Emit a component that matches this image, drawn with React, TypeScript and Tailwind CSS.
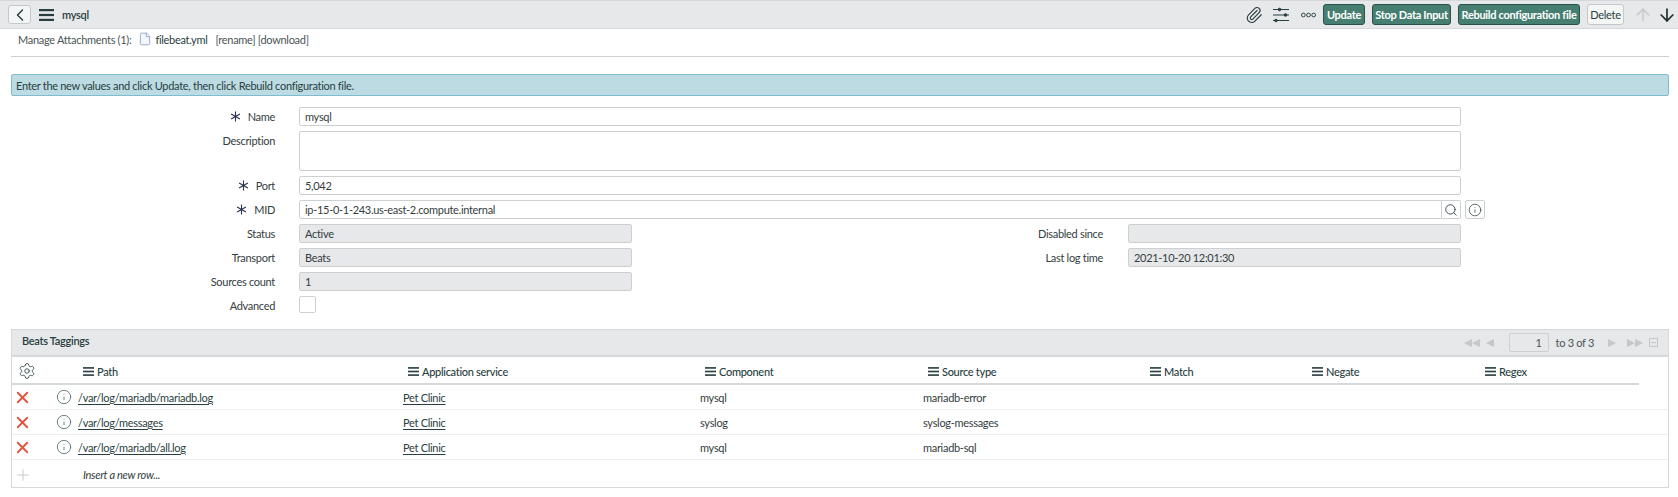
import { ArrowDown, ArrowUp, ChevronLeft, File, Info, Paperclip, Plus, Search, Settings, X } from "lucide-react";

const Bars = ({ className }: { className: string }) => (
  <svg viewBox="0 0 15 12" className={className} fill="#293e40">
    <rect x="0" y="0" width="15" height="2.2" />
    <rect x="0" y="4.9" width="15" height="2.2" />
    <rect x="0" y="9.8" width="15" height="2.2" />
  </svg>
);

const Star = () => (
  <svg viewBox="0 0 12 12" className="w-[11px] h-[11px] shrink-0" stroke="#2c3350" strokeWidth="1.2">
    <path d="M6 0.5V11.5M1.2 3.2L10.8 8.8M1.2 8.8L10.8 3.2" />
  </svg>
);

const Tri = ({ dir, className }: { dir: "l" | "r"; className: string }) => (
  <svg viewBox="0 0 8 8" className={className} fill="#c4c8ca">
    <polygon points={dir === "l" ? "8,0 8,8 0,4" : "0,0 0,8 8,4"} />
  </svg>
);

const Field = ({ value, className, disabled }: { value?: string; className: string; disabled?: boolean }) => (
  <div
    className={`h-[19px] border border-[#cdd0d2] rounded-[2px] px-[5px] flex items-center text-[#343d3e] ${
      disabled ? "bg-[#e6e8ea]" : "bg-white"
    } ${className}`}
  >
    {value}
  </div>
);

const Label = ({ text, required }: { text: string; required?: boolean }) => (
  <div className="w-[264px] h-[19px] flex items-center justify-end gap-[7px] text-[#343d3e]">
    {required && <Star />}
    <span>{text}</span>
  </div>
);

const columns = ["Path", "Application service", "Component", "Source type", "Match", "Negate", "Regex"];

const rows = [
  { path: "/var/log/mariadb/mariadb.log", component: "mysql", source: "mariadb-error" },
  { path: "/var/log/messages", component: "syslog", source: "syslog-messages" },
  { path: "/var/log/mariadb/all.log", component: "mysql", source: "mariadb-sql" },
];

const gridCols = "grid grid-cols-[66px_325px_297px_223px_222px_162px_173px_159px]";

export default function App() {
  return (
    <div className="w-[1678px] h-[497px] overflow-hidden bg-white text-[11px] tracking-[-0.3px] leading-none font-[Lato,sans-serif] text-[#293e40]">
      <div className="h-[29px] bg-[#e6e8ea] border-y border-[#d5d8da] pl-[8px] pr-[1px] flex items-center">
        <div className="w-[23px] h-[19px] bg-[#f4f5f5] border border-[#c4c8ca] rounded-[3px] flex items-center justify-center">
          <ChevronLeft className="w-[20px] h-[20px] text-[#293e40]" strokeWidth={1.75} />
        </div>
        <Bars className="w-[15px] h-[12px] ml-[8px]" />
        <span className="ml-[8px] font-semibold">mysql</span>
        <div className="ml-auto flex items-center">
          <Paperclip className="w-[18px] h-[18px] text-[#293e40]" strokeWidth={1.5} />
          <svg viewBox="0 0 16 16" className="w-[16px] h-[16px] ml-[10px]" stroke="#293e40" fill="#293e40" strokeWidth="1">
            <path d="M0 2.5H16M0 8H16M0 13.5H16" />
            <circle cx="6.5" cy="2.5" r="1.3" />
            <circle cx="12.5" cy="8" r="1.3" />
            <circle cx="3" cy="13.5" r="1.3" />
          </svg>
          <svg viewBox="0 0 16 6" className="w-[15px] h-[6px] ml-[12px]" stroke="#293e40" fill="none" strokeWidth="1">
            <circle cx="2.5" cy="3" r="2" />
            <circle cx="8" cy="3" r="2" />
            <circle cx="13.5" cy="3" r="2" />
          </svg>
          <button className="ml-[7px] h-[21px] w-[42px] bg-[#467f71] border border-[#2a5248] rounded-[3px] text-white font-bold">Update</button>
          <button className="ml-[7px] h-[21px] w-[79px] bg-[#467f71] border border-[#2a5248] rounded-[3px] text-white font-bold">Stop Data Input</button>
          <button className="ml-[7px] h-[21px] w-[122px] bg-[#467f71] border border-[#2a5248] rounded-[3px] text-white font-bold">Rebuild configuration file</button>
          <button className="ml-[7px] h-[21px] w-[37px] bg-[#f4f5f5] border border-[#c4c8ca] rounded-[3px] text-[#293e40]">Delete</button>
          <ArrowUp className="w-[20px] h-[20px] ml-[9px] text-[#c4c8ca]" strokeWidth={1.75} />
          <ArrowDown className="w-[20px] h-[20px] ml-[4px] text-[#1f2d2e]" strokeWidth={2} />
        </div>
      </div>

      <div className="pl-[11px] pr-[9px]">
        <div className="h-[28px] flex items-center pb-[7px] border-b border-[#cdd0d2] pl-[7px]">
          <span className="text-[#4b5557]">Manage Attachments (1):</span>
          <File className="w-[14px] h-[16px] ml-[7px] text-[#8fa3c4]" fill="#f3f6fb" strokeWidth={1.5} />
          <span className="ml-[3px] text-[#293e40]">filebeat.yml</span>
          <span className="ml-[8px] text-[#4b5557]">[rename] [download]</span>
        </div>

        <div className="mt-[17px] h-[22px] bg-[#bcdbe3] border border-[#7fbccd] rounded-[2px] pl-[4px] flex items-center text-[#293e40]">
          Enter the new values and click Update, then click Rebuild configuration file.
        </div>

        <div className="mt-[11px] flex flex-col gap-[5px]">
          <div className="flex">
            <Label text="Name" required />
            <Field value="mysql" className="ml-[24px] w-[1162px]" />
          </div>
          <div className="flex">
            <Label text="Description" />
            <div className="ml-[24px] w-[1162px] h-[40px] border border-[#cdd0d2] rounded-[2px] bg-white" />
          </div>
          <div className="flex">
            <Label text="Port" required />
            <Field value="5,042" className="ml-[24px] w-[1162px]" />
          </div>
          <div className="flex">
            <Label text="MID" required />
            <Field value="ip-15-0-1-243.us-east-2.compute.internal" className="ml-[24px] w-[1143px] rounded-r-none" />
            <div className="w-[19px] h-[19px] border border-l-0 border-[#cdd0d2] rounded-r-[2px] flex items-center justify-center">
              <Search className="w-[14px] h-[14px] text-[#293e40]" strokeWidth={1.5} />
            </div>
            <div className="ml-[4px] w-[20px] h-[19px] border border-[#cdd0d2] rounded-[2px] flex items-center justify-center">
              <Info className="w-[14px] h-[14px] text-[#293e40]" strokeWidth={1.25} />
            </div>
          </div>
          <div className="flex">
            <Label text="Status" />
            <Field value="Active" disabled className="ml-[24px] w-[333px]" />
            <div className="w-[471px] h-[19px] flex items-center justify-end text-[#343d3e]">Disabled since</div>
            <Field disabled className="ml-[25px] w-[333px]" />
          </div>
          <div className="flex">
            <Label text="Transport" />
            <Field value="Beats" disabled className="ml-[24px] w-[333px]" />
            <div className="w-[471px] h-[19px] flex items-center justify-end text-[#343d3e]">Last log time</div>
            <Field value="2021-10-20 12:01:30" disabled className="ml-[25px] w-[333px]" />
          </div>
          <div className="flex">
            <Label text="Sources count" />
            <Field value="1" disabled className="ml-[24px] w-[333px]" />
          </div>
          <div className="flex">
            <Label text="Advanced" />
            <div className="ml-[24px] w-[17px] h-[17px] border border-[#cdd0d2] rounded-[2px] bg-white" />
          </div>
        </div>

        <div className="mt-[14px] border border-[#d5d8da]">
          <div className="h-[27px] bg-[#e6e8ea] border-b-2 border-[#d5d8da] pl-[10px] flex items-center">
            <span className="mb-[4px] font-semibold text-[#293e40]">Beats Taggings</span>
            <div className="ml-auto flex items-center">
              <Tri dir="l" className="w-[8px] h-[8px]" />
              <Tri dir="l" className="w-[8px] h-[8px]" />
              <Tri dir="l" className="w-[8px] h-[8px] ml-[6px]" />
              <div className="ml-[15px] w-[40px] h-[19px] bg-[#e6e8ea] border border-[#cdd0d2] rounded-[2px] flex items-center justify-end pr-[6px] text-[#4b5557]">1</div>
              <span className="ml-[7px] text-[#4b5557]">to 3 of 3</span>
              <Tri dir="r" className="w-[8px] h-[8px] ml-[14px]" />
              <Tri dir="r" className="w-[8px] h-[8px] ml-[11px]" />
              <Tri dir="r" className="w-[8px] h-[8px]" />
              <div className="ml-[6px] mr-[10px] w-[9px] h-[9px] border border-[#c4c8ca] flex items-center justify-center">
                <div className="w-[5px] h-px bg-[#c4c8ca]" />
              </div>
            </div>
          </div>

          <div className={`${gridCols} h-[28px] items-center relative`}>
            <div className="pl-[6px]">
              <Settings className="w-[18px] h-[18px] text-[#293e40]" strokeWidth={1.1} />
            </div>
            {columns.map((c) => (
              <div key={c} className="pl-[5px] flex items-center gap-[3px] text-[#293e40] font-medium">
                <Bars className="w-[11px] h-[9px]" />
                <span>{c}</span>
              </div>
            ))}
            <div className="absolute left-0 bottom-0 w-[1627px] h-[2px] bg-[#d5d8da]" />
          </div>

          {rows.map((r) => (
            <div key={r.path} className={`${gridCols} h-[25px] items-center border-b border-[#eceef0]`}>
              <div className="flex items-center">
                <X className="w-[19px] h-[19px] ml-[1px] text-[#e5533c]" strokeWidth={2.25} />
                <Info className="w-[16px] h-[16px] ml-[24px] text-[#4f6a6c]" strokeWidth={1.25} />
              </div>
              <span className="underline underline-offset-2 text-[#293e40]">{r.path}</span>
              <span className="underline underline-offset-2 text-[#293e40]">Pet Clinic</span>
              <span className="text-[#343d3e]">{r.component}</span>
              <span className="text-[#343d3e]">{r.source}</span>
            </div>
          ))}

          <div className="h-[27px] flex items-center pt-[2px]">
            <Plus className="w-[18px] h-[18px] ml-[2px] text-[#c4c8ca]" strokeWidth={1.25} />
            <span className="ml-[51px] italic text-[#343d3e]">Insert a new row...</span>
          </div>
        </div>
      </div>
    </div>
  );
}
